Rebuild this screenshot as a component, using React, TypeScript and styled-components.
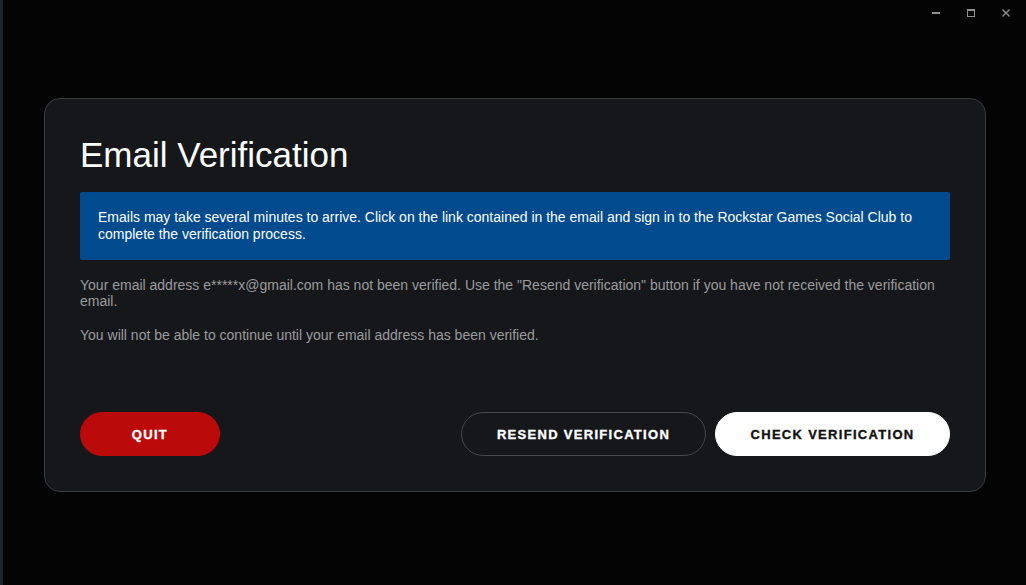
import styled, { createGlobalStyle } from "styled-components"

// Global //

const GlobalStyle = createGlobalStyle`
	html, body {
		margin: 0;
		padding: 0;
		background: #040404;
		height: 100%;
		overflow: hidden;
	}
	body {
		font-family: "Liberation Sans", Arial, sans-serif;
		border-left: 3px solid #1e222b;
		box-sizing: border-box;
	}
`

// Components //

export default function App() {
	return (
		<>
			<GlobalStyle />
			<Window>
				<TitleBar>
					<ControlButton aria-label="Minimize">
						<svg width="10" height="10" viewBox="0 0 10 10">
							<rect x="1" y="4" width="8" height="2" fill="#8f8f8f" />
						</svg>
					</ControlButton>
					<ControlButton aria-label="Maximize">
						<svg width="10" height="10" viewBox="0 0 10 10">
							<rect x="1.5" y="1.5" width="7" height="7" fill="none" stroke="#8f8f8f" strokeWidth="1" />
							<rect x="1" y="1" width="8" height="2" fill="#8f8f8f" />
						</svg>
					</ControlButton>
					<ControlButton aria-label="Close">
						<svg width="10" height="10" viewBox="0 0 10 10">
							<path d="M1.5 1.5 L8.5 8.5 M8.5 1.5 L1.5 8.5" stroke="#8f8f8f" strokeWidth="1.4" />
						</svg>
					</ControlButton>
				</TitleBar>
				<Card>
					<Title>Email Verification</Title>
					<InfoBox>
						Emails may take several minutes to arrive. Click on the link contained in the email and sign in to the
						Rockstar Games Social Club to complete the verification process.
					</InfoBox>
					<BodyText>
						Your email address e*****x@gmail.com has not been verified. Use the "Resend verification" button if you
						have not received the verification email.
					</BodyText>
					<BodyText>You will not be able to continue until your email address has been verified.</BodyText>
					<Footer>
						<PillButton $variant="danger" $width={140}>
							Quit
						</PillButton>
						<ButtonGroup>
							<PillButton $variant="outline" $width={245}>
								Resend verification
							</PillButton>
							<PillButton $variant="light" $width={235}>
								Check verification
							</PillButton>
						</ButtonGroup>
					</Footer>
				</Card>
			</Window>
		</>
	)
}

// Styled Components //

const Window = styled.div`
	display: flex;
	flex-direction: column;
	height: 585px;
`

const TitleBar = styled.div`
	display: flex;
	justify-content: flex-end;
	height: 26px;
	padding-right: 3px;
`

const ControlButton = styled.div`
	width: 35px;
	height: 26px;
	display: flex;
	align-items: center;
	justify-content: center;
`

const Card = styled.section`
	box-sizing: border-box;
	display: flex;
	flex-direction: column;
	margin: 72px 0 0 41px;
	width: 942px;
	height: 394px;
	padding: 36px 35px 35px 35px;
	background: #16171b;
	border: 1px solid #3b3c40;
	border-radius: 16px;
`

const Title = styled.h1`
	margin: 0;
	font-size: 35px;
	font-weight: 400;
	line-height: 40px;
	color: #ffffff;
`

const InfoBox = styled.div`
	margin-top: 17px;
	padding: 17px 18px;
	background: #004b8d;
	border-radius: 2px;
	color: #ffffff;
	font-size: 14px;
	line-height: 17px;
`

const BodyText = styled.p`
	margin: 17px 0 0 0;
	color: #9b9b9d;
	font-size: 14px;
	line-height: 16px;

	& + & {
		margin-top: 18px;
	}
`

const Footer = styled.div`
	margin-top: auto;
	display: flex;
	justify-content: space-between;
	align-items: center;
`

const ButtonGroup = styled.div`
	display: flex;
	gap: 9px;
`

const variants = {
	danger: "background: #bb0a0a; color: #ffffff; border-color: #bb0a0a;",
	outline: "background: transparent; color: #ffffff; border-color: #46474b;",
	light: "background: #ffffff; color: #111111; border-color: #ffffff;"
}

const PillButton = styled.button<{ $variant: keyof typeof variants; $width: number }>`
	box-sizing: border-box;
	width: ${({ $width }) => $width}px;
	height: 44px;
	border: 1px solid;
	border-radius: 22px;
	font-family: "Liberation Sans", Arial, sans-serif;
	font-weight: 700;
	font-size: 13px;
	letter-spacing: 1.3px;
	-webkit-text-stroke: 0.35px currentColor;
	text-transform: uppercase;
	cursor: pointer;
	${({ $variant }) => variants[$variant]}
`
